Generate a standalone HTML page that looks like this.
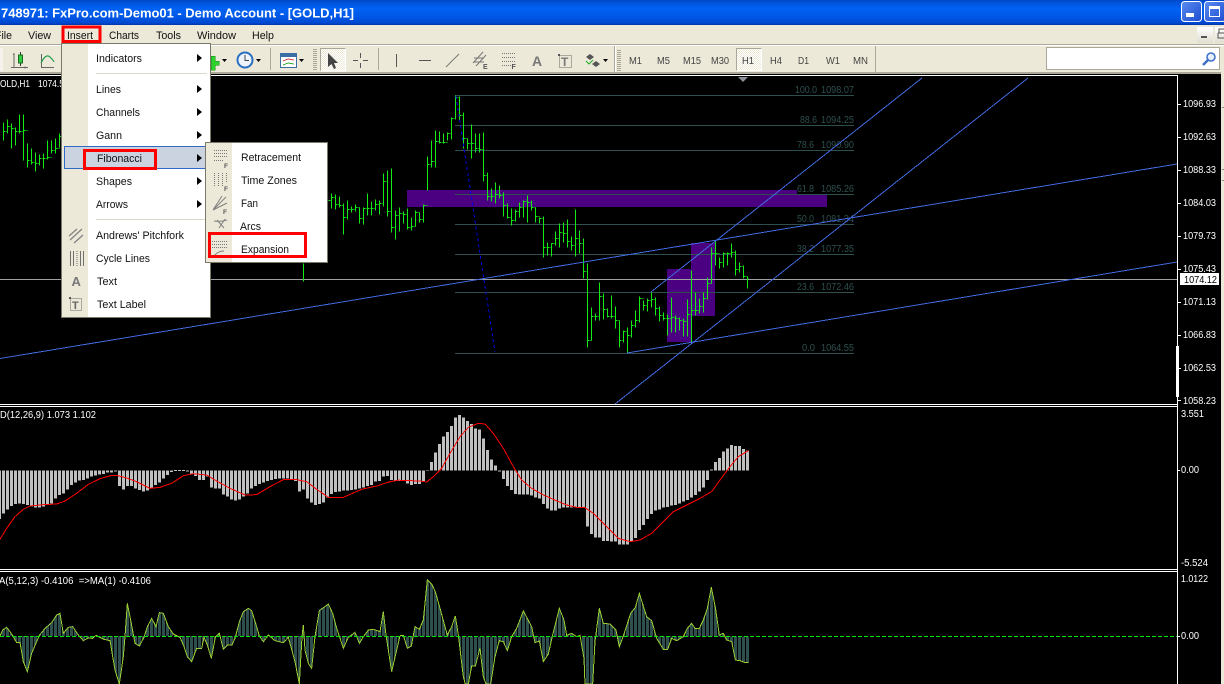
<!DOCTYPE html>
<html><head><meta charset="utf-8"><title>MT4</title>
<style>
html,body{margin:0;padding:0;background:#000;width:1224px;height:684px;overflow:hidden}
svg{display:block;font-family:"Liberation Sans",Arial,sans-serif}
.m{font-size:11px;fill:#111}
.t{font-size:10px;fill:#444}
.a{font-size:10px;fill:#fff}
.f{font-size:10px;fill:#2f4f4f}
.c{shape-rendering:crispEdges}
</style></head><body>
<svg width="1224" height="684" viewBox="0 0 1224 684" xmlns="http://www.w3.org/2000/svg">
<defs>
<linearGradient id="tb" x1="0" y1="0" x2="0" y2="1">
<stop offset="0" stop-color="#0048c8"/><stop offset=".12" stop-color="#0054dc"/><stop offset=".35" stop-color="#0062f4"/><stop offset=".7" stop-color="#0056e4"/><stop offset=".92" stop-color="#0048d0"/><stop offset="1" stop-color="#0036a8"/>
</linearGradient>
<linearGradient id="wb" x1="0" y1="0" x2="1" y2="1"><stop offset="0" stop-color="#5c8cf0"/><stop offset="1" stop-color="#1c4cd0"/></linearGradient>
<linearGradient id="btn" x1="0" y1="0" x2="0" y2="1"><stop offset="0" stop-color="#fff"/><stop offset="1" stop-color="#e0ddd0"/></linearGradient>
<pattern id="dots" width="2" height="2" patternUnits="userSpaceOnUse"><rect width="2" height="2" fill="#fff"/><rect width="1" height="1" fill="#ece9d8"/><rect x="1" y="1" width="1" height="1" fill="#ece9d8"/></pattern>
<path id="oscL" d="M0 708L8 690L20 682L30 695L40 710L50 728L60 727L70 785L82 815L95 760L118 706L135 685L155 668L170 645L180 640L190 700L205 682L218 680L235 705L250 722L265 714L278 715L288 706L300 712L312 718L330 722L345 810L358 852L370 770L375 710L382 610L392 660L405 730L418 738L432 712L442 680L455 655L468 680L478 638L490 640L505 680L520 702L540 712L552 740L562 770L575 785L590 745L605 745L612 712L622 735L634 775L646 712L658 700L670 748L682 735L696 735L706 712L718 665L730 635L745 625L755 632L770 680L778 708L790 725L805 705L825 722L850 728L865 712L885 785L898 852L906 710L910 675L915 750L925 790L935 805L945 710L958 632L985 612L998 640L1010 685L1030 745L1045 712L1065 697L1078 730L1090 710L1105 690L1120 688L1140 695L1150 635L1158 705L1175 815L1190 750L1200 708"/>
</defs>

<rect width="1224" height="684" fill="#000"/>

<!-- purple boxes -->
<g class="c">
<rect x="407" y="190" width="420" height="17" fill="#4b0082"/>
<rect x="667" y="269" width="24" height="73" fill="#4b0082"/>
<rect x="691" y="243" width="24" height="73" fill="#4b0082"/>
<rect x="797" y="183" width="57" height="11" fill="#000"/>
</g>

<!-- gray price line -->
<rect x="0" y="279" width="1177" height="1" fill="#a0a0a0"/>

<!-- fib lines -->
<g class="c" fill="#2f4f4f">
<rect x="455" y="95" width="399" height="1"/><rect x="455" y="125" width="399" height="1"/><rect x="455" y="150" width="399" height="1"/><rect x="455" y="194" width="399" height="1"/><rect x="455" y="224" width="399" height="1"/><rect x="455" y="254" width="399" height="1"/><rect x="455" y="292" width="399" height="1"/><rect x="455" y="353" width="399" height="1"/>
</g>
<g>
<text class="f" x="795" y="93" textLength="22" lengthAdjust="spacingAndGlyphs">100.0</text><text class="f" x="821" y="93" textLength="33" lengthAdjust="spacingAndGlyphs">1098.07</text>
<text class="f" x="800" y="123" textLength="17" lengthAdjust="spacingAndGlyphs">88.6</text><text class="f" x="821" y="123" textLength="33" lengthAdjust="spacingAndGlyphs">1094.25</text>
<text class="f" x="797" y="148" textLength="17" lengthAdjust="spacingAndGlyphs">78.6</text><text class="f" x="821" y="148" textLength="33" lengthAdjust="spacingAndGlyphs">1090.90</text>
<text class="f" x="797" y="192" textLength="17" lengthAdjust="spacingAndGlyphs">61.8</text><text class="f" x="821" y="192" textLength="33" lengthAdjust="spacingAndGlyphs">1085.26</text>
<text class="f" x="797" y="222" textLength="17" lengthAdjust="spacingAndGlyphs">50.0</text><text class="f" x="821" y="222" textLength="33" lengthAdjust="spacingAndGlyphs">1081.34</text>
<text class="f" x="797" y="252" textLength="17" lengthAdjust="spacingAndGlyphs">38.2</text><text class="f" x="821" y="252" textLength="33" lengthAdjust="spacingAndGlyphs">1077.35</text>
<text class="f" x="797" y="290" textLength="17" lengthAdjust="spacingAndGlyphs">23.6</text><text class="f" x="821" y="290" textLength="33" lengthAdjust="spacingAndGlyphs">1072.46</text>
<text class="f" x="802" y="351" textLength="13" lengthAdjust="spacingAndGlyphs">0.0</text><text class="f" x="821" y="351" textLength="33" lengthAdjust="spacingAndGlyphs">1064.55</text>
</g>

<!-- price bars -->
<path class="c" transform="translate(.5 .5)" fill="none" stroke="#14ea14" stroke-width="1" d="M3 122V140M3 131h2m1 0h1M7 119V133M7 126h2m1 0h1M11 123V148M11 128h2m1 0h1M15 127V145M15 131h2m1 0h1M19 114V133M19 131h2m1 0h1M23 114V160M23 130h2m1 0h1M27 143V167M27 160h2m1 0h1M31 148V164M31 162h2m1 0h1M35 152V171M35 163h2m1 0h1M39 154V165M39 158h2m1 0h1M43 153V168M43 158h2m1 0h1M47 140V159M47 157h2m1 0h1M51 140V153M51 150h2m1 0h1M55 138V153M55 148h2m1 0h1M59 133V147M59 136h2
M303 263V281
M331 193V208M328 200h2M331 197h2m1 0h1M335 194V209M335 204h2m1 0h1M339 196V207M339 205h2m1 0h1M343 203V234M343 217h2m1 0h1M347 200V219M347 209h2m1 0h1M351 206V212M351 209h2m1 0h1M355 204V211M355 207h2m1 0h1M359 207V223M359 218h2m1 0h1M363 207V224M363 208h2m1 0h1M367 193V215M367 208h2m1 0h1M371 201V215M371 208h2m1 0h1M375 199V210M375 204h2m1 0h1M379 200V214M379 203h2m1 0h1M383 173V206M383 181h2m1 0h1M387 170V216M387 211h2m1 0h1M391 168V232M391 227h2m1 0h1M395 210V239M395 215h2m1 0h1M399 207V231M399 213h2m1 0h1M403 211V223M403 214h2m1 0h1M407 208V229M407 227h2m1 0h1M411 217V230M411 226h2m1 0h1M415 210V226M415 212h2m1 0h1M419 212V222M419 219h2m1 0h1M423 204V222M423 205h2m1 0h1
M427 156V190M427 164h2m1 0h1M431 140V167M431 161h2m1 0h1M435 130V167M435 141h2m1 0h1M439 131V143M439 142h2m1 0h1M443 133V143M443 142h2m1 0h1M447 132V140M447 133h2m1 0h1M451 117V139M451 118h2m1 0h1M455 95V119M455 97h2m1 0h1M459 96V120M459 115h2m1 0h1M463 112V148M463 138h2m1 0h1M467 138V149M467 143h2m1 0h1M471 124V158M471 143h2m1 0h1M475 133V152M475 148h2m1 0h1M479 133V152M479 149h2m1 0h1M483 132V181M483 175h2m1 0h1M487 172V200M487 196h2m1 0h1M491 188V201M491 196h2m1 0h1M495 182V203M495 194h2m1 0h1M499 185V198M499 195h2m1 0h1M503 192V216M503 205h2m1 0h1M507 203V218M507 217h2m1 0h1M511 208V225M511 220h2m1 0h1M515 209V221M515 211h2m1 0h1M519 202V217M519 207h2m1 0h1M523 200V217M523 201h2m1 0h1M527 195V222M527 202h2m1 0h1M531 200V210M531 207h2m1 0h1M535 207V222M535 216h2m1 0h1M539 217V223M539 218h2m1 0h1M543 216V257M543 247h2m1 0h1M547 242V255M547 247h2m1 0h1M551 243V256M551 243h2m1 0h1M555 231V245M555 238h2m1 0h1M559 223V247M559 232h2m1 0h1M563 222V242M563 233h2m1 0h1M567 219V247M567 241h2m1 0h1M571 236V250M571 245h2m1 0h1M575 209V256M575 238h2m1 0h1M579 230V253M579 243h2m1 0h1M583 238V278M583 271h2m1 0h1
M587 263V347M587 340h2m1 0h1M591 307V340M591 316h2m1 0h1M595 313V320M595 316h2m1 0h1M599 282V320M599 296h2m1 0h1M603 293V319M603 309h2m1 0h1M607 308V317M607 316h2m1 0h1M611 295V318M611 316h2m1 0h1M615 306V328M615 320h2m1 0h1M619 320V347M619 340h2m1 0h1M623 330V342M623 331h2m1 0h1M627 327V353M627 335h2m1 0h1M631 320V337M631 325h2m1 0h1M635 310V327M635 320h2m1 0h1M639 296V322M639 298h2m1 0h1M643 300V310M643 305h2m1 0h1M647 298V311M647 300h2m1 0h1M651 292V307M651 299h2m1 0h1M655 297V315M655 308h2m1 0h1M659 306V321M659 315h2m1 0h1M663 312V320M663 318h2m1 0h1M667 314V335M667 318h2m1 0h1M671 297V332M671 317h2m1 0h1M675 315V332M675 318h2m1 0h1M679 317V330M679 320h2m1 0h1M683 318V336M683 321h2m1 0h1M687 299V336M687 314h2m1 0h1M691 270V343M691 310h2m1 0h1M695 292V315M695 310h2m1 0h1M699 298V313M699 306h2m1 0h1M703 292V312M703 298h2m1 0h1M707 277V299M707 283h2m1 0h1M711 247V283M711 253h2m1 0h1M715 240V265M715 253h2m1 0h1M719 257V268M719 262h2m1 0h1M723 252V267M723 253h2m1 0h1M727 252V265M727 253h2m1 0h1M731 243V257M731 252h2m1 0h1M735 250V275M735 269h2m1 0h1M739 262V272M739 266h2m1 0h1M743 265V278M743 276h2m1 0h1M747 276V288M747 278h1"/>

<!-- trend lines -->
<g class="c" stroke="#4169e1" stroke-width="1" fill="none">
<path d="M0 358.5L1177 164"/>
<path d="M627 353L1177 262"/>
<path d="M651 292L922 78"/>
<path d="M615 404L1028 78"/>
</g>
<path class="c" d="M456 96L495 352" stroke="#0000e6" stroke-width="1" stroke-dasharray="3 3" fill="none"/>

<!-- MACD + OSMA left -->
<g class="c" transform="translate(0 400) scale(.33333)">
<path fill="none" stroke="#c0c0c0" stroke-width="9" d="M-1.5 212V357M10.5 212V340M22.5 212V328M34.5 212V318M46.5 212V312M58.5 212V310M70.5 212V312M82.5 212V315M94.5 212V320M106.5 212V322M118.5 212V322M130.5 212V320M142.5 212V312M154.5 212V310M166.5 212V295M178.5 212V285M190.5 212V280M202.5 212V268M214.5 212V255M226.5 212V247M238.5 212V242M250.5 212V240M262.5 212V235M274.5 212V230M286.5 212V226M298.5 212V224M310.5 212V222M322.5 212V218M334.5 212V217M346.5 212V214M358.5 212V258M370.5 212V268M382.5 212V258M394.5 212V258M406.5 212V265M418.5 212V270M430.5 212V275M442.5 212V272M454.5 212V265M466.5 212V255M478.5 212V248M490.5 212V235M502.5 212V225M514.5 212V216M526.5 210V213M538.5 210V213M550.5 210V213M562.5 212V215M574.5 212V222M586.5 212V228M598.5 212V240M610.5 212V240M622.5 212V230M634.5 212V262M646.5 212V265M658.5 212V265M670.5 212V283M682.5 212V290M694.5 212V298M706.5 212V302M718.5 212V298M730.5 212V290M742.5 212V280M754.5 212V265M766.5 212V258M778.5 212V252M790.5 212V248M802.5 212V243M814.5 212V240M826.5 212V237M838.5 212V236M850.5 212V236M862.5 212V236M874.5 212V240M886.5 212V243M898.5 212V275M910.5 212V268M922.5 212V295M934.5 212V308M946.5 212V315M958.5 212V312M970.5 212V308M982.5 212V292M994.5 212V282M1006.5 212V276M1018.5 212V275M1030.5 212V272M1042.5 212V272M1054.5 212V270M1066.5 212V268M1078.5 212V265M1090.5 212V262M1102.5 212V258M1114.5 212V255M1126.5 212V245M1138.5 212V243M1150.5 212V230M1162.5 212V228M1174.5 212V240M1186.5 212V242M1198.5 212V243"/>
<path fill="none" stroke="#f00" stroke-width="3" d="M0 418L20 385L45 350L70 328L90 318L130 314L170 312L195 303L230 280L265 253L300 236L335 226L350 226L380 234L410 245L450 265L480 262L515 250L550 227L580 221L620 225L650 243L690 265L735 285L770 284L810 260L850 239L885 238L920 245L950 268L985 292L1030 292L1085 268L1130 258L1170 245L1200 240"/>
<use href="#oscL" fill="#2f4f4f" stroke="none"/>
<path d="M0 696H1200" stroke="#000" stroke-width="320" stroke-dasharray="3 9" stroke-dashoffset="-3" fill="none"/>
<use href="#oscL" fill="none" stroke="#9acd32" stroke-width="3"/>
</g>
<!-- MACD + OSMA right -->
<g class="c" transform="translate(400 400) scale(.33333)">
<path fill="none" stroke="#c0c0c0" stroke-width="9" d="M10.5 212V243M22.5 212V250M34.5 212V255M46.5 212V252M58.5 212V252M70.5 212V245M82.5 212V210M94.5 212V186M106.5 212V157M118.5 212V132M130.5 212V110M142.5 212V96M154.5 212V78M166.5 212V52M178.5 212V45M190.5 212V52M202.5 212V63M214.5 212V72M226.5 212V85M238.5 212V88M250.5 212V115M262.5 212V150M274.5 212V178M286.5 212V197M298.5 212V214M310.5 212V237M322.5 212V258M334.5 212V270M346.5 212V282M358.5 212V284M370.5 212V283M382.5 212V284M394.5 212V287M406.5 212V292M418.5 212V295M430.5 212V312M442.5 212V326M454.5 212V332M466.5 212V332M478.5 212V325M490.5 212V322M502.5 212V322M514.5 212V322M526.5 212V323M538.5 212V323M550.5 212V323M562.5 212V380M574.5 212V402M586.5 212V413M598.5 212V413M610.5 212V423M622.5 212V423M634.5 212V424M646.5 212V425M658.5 212V434M670.5 212V434M682.5 212V434M694.5 212V424M706.5 212V414M718.5 212V390M730.5 212V375M742.5 212V357M754.5 212V342M766.5 212V332M778.5 212V328M790.5 212V322M802.5 212V321M814.5 212V317M826.5 212V315M838.5 212V310M850.5 212V305M862.5 212V300M874.5 212V292M886.5 212V285M898.5 212V275M910.5 212V262M922.5 212V240M934.5 212V208M946.5 212V186M958.5 212V174M970.5 212V155M982.5 212V146M994.5 212V135M1006.5 212V138M1018.5 212V138M1030.5 212V147M1042.5 212V152"/>
<path fill="none" stroke="#f00" stroke-width="3" d="M0 241L60 243L80 246L100 230L125 205L150 160L180 110L205 82L235 70L255 72L280 100L310 145L340 200L365 240L395 265L430 285L460 298L500 315L530 322L555 323L580 340L620 380L655 415L690 425L720 420L755 400L790 365L820 335L860 315L900 295L935 275L960 240L990 200L1015 170L1045 152"/>
<path fill="#2f4f4f" d="M0 709L0 706L10 706L22 745L34 738L45 680L58 688L70 660L82 540L95 552L106 575L120 625L135 680L142 705L155 680L166 648L175 705L190 830L196 852L205 852L215 798L226 798L240 745L250 830L258 852L272 852L285 770L298 722L310 725L322 752L335 710L350 685L370 633L395 680L405 728L418 723L430 785L445 762L458 705L478 625L492 660L500 706L515 700L530 710L540 706L552 775L555 852L578 852L585 725L598 625L610 670L630 672L648 690L658 740L670 708L692 640L706 622L718 580L740 650L755 662L770 715L790 748L803 748L815 715L830 722L850 710L862 685L875 670L885 685L898 685L910 660L922 625L934 562L946 622L958 705L970 700L980 720L995 725L1006 780L1020 782L1033 787L1047 788L1047 709Z"/>
<path d="M0 696H1047" stroke="#000" stroke-width="320" stroke-dasharray="3 9" stroke-dashoffset="-3" fill="none"/>
<path fill="none" stroke="#9acd32" stroke-width="3" d="M0 706L10 706L22 745L34 738L45 680L58 688L70 660L82 540L95 552L106 575L120 625L135 680L142 705L155 680L166 648L175 705L190 830L196 852L205 852L215 798L226 798L240 745L250 830L258 852L272 852L285 770L298 722L310 725L322 752L335 710L350 685L370 633L395 680L405 728L418 723L430 785L445 762L458 705L478 625L492 660L500 706L515 700L530 710L540 706L552 775L555 852L578 852L585 725L598 625L610 670L630 672L648 690L658 740L670 708L692 640L706 622L718 580L740 650L755 662L770 715L790 748L803 748L815 715L830 722L850 710L862 685L875 670L885 685L898 685L910 660L922 625L934 562L946 622L958 705L970 700L980 720L995 725L1006 780L1020 782L1033 787L1045 788"/>
</g>
<path class="c" d="M0 636.5H1177" stroke="#00e600" stroke-width="1" stroke-dasharray="4 2"/>

<!-- panel frames -->
<g class="c" fill="#fff">
<rect x="0" y="75" width="1178" height="1"/>
<rect x="1177" y="75" width="1" height="609"/>
<rect x="0" y="404" width="1178" height="1"/>
<rect x="0" y="406" width="1178" height="1"/>
<rect x="0" y="569" width="1178" height="1"/>
<rect x="0" y="571" width="1178" height="1"/>
<rect x="1176" y="346" width="3" height="51"/>
<rect x="1178" y="104" width="3" height="1"/><rect x="1178" y="137" width="3" height="1"/><rect x="1178" y="170" width="3" height="1"/><rect x="1178" y="203" width="3" height="1"/><rect x="1178" y="236" width="3" height="1"/><rect x="1178" y="269" width="3" height="1"/><rect x="1178" y="302" width="3" height="1"/><rect x="1178" y="335" width="3" height="1"/><rect x="1178" y="368" width="3" height="1"/><rect x="1178" y="400" width="3" height="1"/><rect x="1178" y="470" width="2" height="1"/><rect x="1178" y="636" width="2" height="1"/>
</g>
<!-- axis labels -->
<g>
<text class="a" x="1183" y="107" textLength="33" lengthAdjust="spacingAndGlyphs">1096.93</text>
<text class="a" x="1183" y="140" textLength="33" lengthAdjust="spacingAndGlyphs">1092.63</text>
<text class="a" x="1183" y="173" textLength="33" lengthAdjust="spacingAndGlyphs">1088.33</text>
<text class="a" x="1183" y="206" textLength="33" lengthAdjust="spacingAndGlyphs">1084.03</text>
<text class="a" x="1183" y="239" textLength="33" lengthAdjust="spacingAndGlyphs">1079.73</text>
<text class="a" x="1183" y="272" textLength="33" lengthAdjust="spacingAndGlyphs">1075.43</text>
<text class="a" x="1183" y="305" textLength="33" lengthAdjust="spacingAndGlyphs">1071.13</text>
<text class="a" x="1183" y="338" textLength="33" lengthAdjust="spacingAndGlyphs">1066.83</text>
<text class="a" x="1183" y="371" textLength="33" lengthAdjust="spacingAndGlyphs">1062.53</text>
<text class="a" x="1183" y="404" textLength="33" lengthAdjust="spacingAndGlyphs">1058.23</text>
<text class="a" x="1181" y="417" textLength="23" lengthAdjust="spacingAndGlyphs">3.551</text>
<text class="a" x="1181" y="473" textLength="18" lengthAdjust="spacingAndGlyphs">0.00</text>
<text class="a" x="1181" y="566" textLength="27" lengthAdjust="spacingAndGlyphs">-5.524</text>
<text class="a" x="1181" y="582" textLength="27" lengthAdjust="spacingAndGlyphs">1.0122</text>
<text class="a" x="1181" y="639" textLength="18" lengthAdjust="spacingAndGlyphs">0.00</text>
</g>
<rect class="c" x="1180" y="273" width="39" height="12" fill="#fff"/>
<text x="1184" y="283" font-size="10" fill="#000" textLength="33" lengthAdjust="spacingAndGlyphs">1074.12</text>

<!-- indicator labels -->
<text class="a" x="0" y="87" textLength="30" lengthAdjust="spacingAndGlyphs">OLD,H1</text>
<text class="a" x="38" y="87" textLength="26" lengthAdjust="spacingAndGlyphs">1074.5</text>
<text class="a" x="0" y="418" textLength="96" lengthAdjust="spacingAndGlyphs">D(12,26,9) 1.073 1.102</text>
<text class="a" x="-1" y="584" textLength="152" lengthAdjust="spacingAndGlyphs" xml:space="preserve">A(5,12,3) -0.4106  =&gt;MA(1) -0.4106</text>

<!-- right strip -->
<rect class="c" x="1221" y="46" width="3" height="638" fill="#ece9d8"/>
<rect class="c" x="1222" y="107" width="2" height="1" fill="#888"/><rect class="c" x="1222" y="169" width="2" height="1" fill="#888"/><rect class="c" x="1222" y="180" width="2" height="1" fill="#888"/>

<!-- triangle marker -->
<path d="M738 77H748L743 82Z" fill="#8a8f9a"/>

<!-- title bar -->
<rect width="1224" height="25" fill="url(#tb)"/>
<text x="1" y="17.5" font-size="13" font-weight="bold" fill="#fff" textLength="353">748971: FxPro.com-Demo01 - Demo Account - [GOLD,H1]</text>
<rect x="1181.5" y="1.5" width="20" height="20" rx="3" fill="url(#wb)" stroke="#fff"/>
<rect class="c" x="1186" y="13" width="8" height="4" fill="#fff"/>
<rect x="1204.5" y="1.5" width="21" height="20" rx="3" fill="url(#wb)" stroke="#fff"/>
<rect x="1209.5" y="6.5" width="10" height="10" fill="none" stroke="#fff"/><rect class="c" x="1209" y="6" width="11" height="3" fill="#fff"/>

<!-- menu bar -->
<rect class="c" y="25" width="1224" height="19" fill="#ece9d8"/>
<rect class="c" y="44" width="1224" height="1" fill="#aca899"/>
<rect class="c" y="45" width="1224" height="1" fill="#fff"/>
<text class="m" x="-5" y="39" textLength="17" lengthAdjust="spacingAndGlyphs">File</text>
<text class="m" x="28" y="39" textLength="23" lengthAdjust="spacingAndGlyphs">View</text>
<text class="m" x="67" y="39" textLength="26" lengthAdjust="spacingAndGlyphs">Insert</text>
<text class="m" x="109" y="39" textLength="30" lengthAdjust="spacingAndGlyphs">Charts</text>
<text class="m" x="156" y="39" textLength="25" lengthAdjust="spacingAndGlyphs">Tools</text>
<text class="m" x="197" y="39" textLength="39" lengthAdjust="spacingAndGlyphs">Window</text>
<text class="m" x="252" y="39" textLength="22" lengthAdjust="spacingAndGlyphs">Help</text>
<rect x="1197" y="27" width="16" height="16" fill="url(#btn)"/>
<rect class="c" x="1201" y="36" width="6" height="2" fill="#555"/>
<rect x="1215" y="27" width="9" height="16" fill="url(#btn)"/>
<path class="c" d="M1219 33V29H1224M1218 33H1224M1218 33V38H1224" fill="none" stroke="#555"/>

<!-- toolbar -->
<rect class="c" y="46" width="1224" height="26" fill="#ece9d8"/>
<rect class="c" y="72" width="1221" height="2" fill="#aca899"/>
<rect class="c" y="74" width="1221" height="1" fill="#000"/>
<rect class="c" x="0" y="48" width="3" height="23" fill="#f4f2ea"/>
<path class="c" d="M14 53V67.500M11 67.500H28M14 54l-1 1M25 66.500v2" stroke="#666" fill="none"/>
<path class="c" d="M20.500 52V66" stroke="#333"/>
<rect class="c" x="18.500" y="55" width="4" height="8" fill="#2ecc40" stroke="#1a6a20"/>
<path class="c" d="M41.500 54V67.500H54" stroke="#666" fill="none"/>
<path d="M41 63Q46 53 50 57T54 62" stroke="#1e9a4a" fill="none" stroke-width="1.200"/>
<path class="c" d="M211 56H215V61H219V65H215V70H211Z" fill="#2dd32d" stroke="#188a18" stroke-width=".5"/>
<path d="M222 59H227L224.500 62Z" fill="#000"/>
<circle cx="245" cy="60" r="7.500" fill="#eef3fa" stroke="#2a6fc0" stroke-width="2"/>
<path d="M245 55V60.500H249" stroke="#444" fill="none"/>
<path d="M256 59H261L258.500 62Z" fill="#000"/>
<rect class="c" x="270" y="48" width="1" height="22" fill="#aca899"/>
<rect class="c" x="280.500" y="53.500" width="16" height="14" fill="#fff" stroke="#3a6ea5"/>
<rect class="c" x="281" y="54" width="15" height="3" fill="#3a6ea5"/>
<path class="c" d="M283 61L288 59L294 60" stroke="#c44" fill="none"/>
<path class="c" d="M283 65L288 63L294 64" stroke="#3a3" fill="none"/>
<path d="M299 59H304L301.500 62Z" fill="#000"/>
<path class="c" d="M315 49V71" stroke="#aca899" stroke-width="4" stroke-dasharray="1 1"/>
<rect class="c" x="320" y="48" width="26" height="23" fill="url(#dots)"/>
<path class="c" d="M320.500 71V48.500H346" stroke="#aca899" fill="none"/>
<path class="c" d="M320.500 71H345.500V48.500" stroke="#fff" fill="none"/>
<path d="M328 53L328 67L331.500 64L334 69L336 68L334 63L338 63Z" fill="#444"/>
<path class="c" d="M353 60.500H358M363 60.500H368M360.500 53V58M360.500 63V68" stroke="#555" fill="none"/>
<rect class="c" x="378" y="48" width="1" height="22" fill="#aca899"/>
<rect class="c" x="396" y="54" width="1" height="13" fill="#555"/>
<rect class="c" x="419" y="60" width="12" height="1" fill="#555"/>
<path d="M446 67L459 54" stroke="#777" fill="none"/>
<path d="M473 63L483 52M476 66L486 55M474 58H484M474 62H484" stroke="#777" fill="none"/>
<text x="483" y="69" font-size="7" font-weight="bold" fill="#555">E</text>
<path class="c" d="M502 53.500H516M502 57.500H516M502 61.500H516M502 65.500H511" stroke="#777" stroke-dasharray="1 1" fill="none"/>
<text x="511.500" y="69" font-size="7" font-weight="bold" fill="#555">F</text>
<text x="532" y="66" font-size="14" font-weight="bold" fill="#777">A</text>
<rect class="c" x="559.500" y="55.500" width="12" height="12" fill="none" stroke="#666" stroke-dasharray="1 1"/>
<rect class="c" x="558" y="54" width="2" height="2" fill="#555"/>
<text x="561" y="66" font-size="12" font-weight="bold" fill="#777">T</text>
<path d="M586 57L590 54L594 57L590 60ZM592 64L596 61L600 64L596 67Z" fill="#555"/>
<path d="M586 61L589 64L593 60" stroke="#2a2" fill="none"/>
<path d="M603 59H608L605.500 62Z" fill="#000"/>
<rect class="c" x="614" y="46" width="1" height="26" fill="#aca899"/><rect class="c" x="615" y="46" width="1" height="26" fill="#fff"/>
<path class="c" d="M619 50V71" stroke="#aca899" stroke-width="4" stroke-dasharray="1 1"/>
<rect class="c" x="736" y="48" width="26" height="23" fill="url(#dots)"/>
<path class="c" d="M736.500 71V48.500H762" stroke="#aca899" fill="none"/>
<path class="c" d="M736.500 70.500H761.500V48.500" stroke="#fff" fill="none"/>
<text class="t" x="629" y="64" textLength="13" lengthAdjust="spacingAndGlyphs">M1</text>
<text class="t" x="657" y="64" textLength="13" lengthAdjust="spacingAndGlyphs">M5</text>
<text class="t" x="683" y="64" textLength="18" lengthAdjust="spacingAndGlyphs">M15</text>
<text class="t" x="711" y="64" textLength="18" lengthAdjust="spacingAndGlyphs">M30</text>
<text class="t" x="742" y="64" textLength="12" lengthAdjust="spacingAndGlyphs">H1</text>
<text class="t" x="770" y="64" textLength="12" lengthAdjust="spacingAndGlyphs">H4</text>
<text class="t" x="798" y="64" textLength="11" lengthAdjust="spacingAndGlyphs">D1</text>
<text class="t" x="826" y="64" textLength="14" lengthAdjust="spacingAndGlyphs">W1</text>
<text class="t" x="853" y="64" textLength="15" lengthAdjust="spacingAndGlyphs">MN</text>
<rect class="c" x="875" y="46" width="1" height="26" fill="#aca899"/>
<rect class="c" x="1046.500" y="47.500" width="173" height="22" fill="#fff" stroke="#aca899"/>
<circle cx="1211" cy="57" r="4" fill="#e8f0fb" stroke="#3a6fc4" stroke-width="1.500"/>
<path d="M1208 60L1203 65" stroke="#3a6fc4" stroke-width="2.500"/>

<!-- Insert menu -->
<rect class="c" x="61.500" y="43.500" width="149" height="274" fill="#fff" stroke="#7a7868"/>
<rect class="c" x="62" y="44" width="26" height="273" fill="#ece9d8"/>
<rect class="c" x="64.500" y="146.500" width="142" height="22" fill="#ccd3e0" stroke="#316ac5"/>
<rect class="c" x="96" y="73" width="111" height="1" fill="#dcd9cc"/>
<rect class="c" x="96" y="219" width="111" height="1" fill="#dcd9cc"/>
<text class="m" x="96" y="62" textLength="46" lengthAdjust="spacingAndGlyphs">Indicators</text>
<text class="m" x="96" y="93" textLength="25" lengthAdjust="spacingAndGlyphs">Lines</text>
<text class="m" x="96" y="116" textLength="44" lengthAdjust="spacingAndGlyphs">Channels</text>
<text class="m" x="96" y="139" textLength="26" lengthAdjust="spacingAndGlyphs">Gann</text>
<text class="m" x="97" y="162" textLength="45" lengthAdjust="spacingAndGlyphs">Fibonacci</text>
<text class="m" x="96" y="185" textLength="36" lengthAdjust="spacingAndGlyphs">Shapes</text>
<text class="m" x="96" y="208" textLength="32" lengthAdjust="spacingAndGlyphs">Arrows</text>
<text class="m" x="96" y="239" textLength="88" lengthAdjust="spacingAndGlyphs">Andrews' Pitchfork</text>
<text class="m" x="96" y="262" textLength="54" lengthAdjust="spacingAndGlyphs">Cycle Lines</text>
<text class="m" x="97" y="285" textLength="20" lengthAdjust="spacingAndGlyphs">Text</text>
<text class="m" x="97" y="308" textLength="49" lengthAdjust="spacingAndGlyphs">Text Label</text>
<path d="M197 54L202 58L197 62ZM197 85L202 89L197 93ZM197 108L202 112L197 116ZM197 131L202 135L197 139ZM197 154L202 158L197 162ZM197 177L202 181L197 185ZM197 200L202 204L197 208Z" fill="#000"/>
<path d="M69 236L77 229M70 240L82 229M74 243L83 235" stroke="#808080" fill="none" stroke-width="1.200"/>
<path class="c" d="M70.500 251V266M73.500 251V266M80.500 251V266M83.500 251V266" stroke="#707070" fill="none"/>
<path class="c" d="M77 251V266" stroke="#707070" stroke-dasharray="1 1" fill="none"/>
<text x="71.500" y="286" font-size="13" font-weight="bold" fill="#777">A</text>
<rect class="c" x="70.500" y="298.500" width="11" height="12" fill="none" stroke="#666" stroke-dasharray="1 1"/>
<rect class="c" x="69" y="297" width="2" height="2" fill="#555"/>
<text x="72" y="309" font-size="11" font-weight="bold" fill="#666">T</text>

<!-- Fibonacci submenu -->
<rect class="c" x="205.500" y="142.500" width="122" height="120" fill="#fff" stroke="#7a7868"/>
<rect class="c" x="206" y="143" width="26" height="119" fill="#ece9d8"/>
<text class="m" x="241" y="161" textLength="60" lengthAdjust="spacingAndGlyphs">Retracement</text>
<text class="m" x="241" y="184" textLength="56" lengthAdjust="spacingAndGlyphs">Time Zones</text>
<text class="m" x="241" y="207" textLength="17" lengthAdjust="spacingAndGlyphs">Fan</text>
<text class="m" x="240" y="230" textLength="21" lengthAdjust="spacingAndGlyphs">Arcs</text>
<text class="m" x="241" y="253" textLength="48" lengthAdjust="spacingAndGlyphs">Expansion</text>
<g fill="#555" font-size="6.500" font-weight="bold">
<path class="c" d="M214 150.500H228M214 153.500H228M214 156.500H228M214 160.500H224" stroke="#777" stroke-dasharray="1 1" fill="none"/>
<text x="224" y="168">F</text>
<path class="c" d="M214.500 173V187M218.500 173V187M222.500 173V187M226.500 173V183" stroke="#777" stroke-dasharray="1 1" fill="none"/>
<text x="224" y="191">F</text>
<path d="M213 210L226 197M213 210L222 196M213 210L227 203" stroke="#808080" fill="none"/>
<text x="223" y="214">F</text>
<path d="M214 221Q221 222 227 220M217 220L224 228M225 219L219 228" stroke="#808080" fill="none"/>
<path class="c" d="M212 241.500H228M212 244.500H228M212 247.500H228" stroke="#777" stroke-dasharray="1 1" fill="none"/>
<path d="M214 256Q218 251 224 251" stroke="#808080" fill="none"/>
</g>

<!-- red boxes -->
<g class="c" fill="none" stroke="#f00" stroke-width="3">
<rect x="63" y="27" width="37" height="14.500"/>
<rect x="84.500" y="150.500" width="71" height="18"/>
<rect x="209.500" y="233.500" width="96" height="23"/>
</g>
</svg>
</body></html>
